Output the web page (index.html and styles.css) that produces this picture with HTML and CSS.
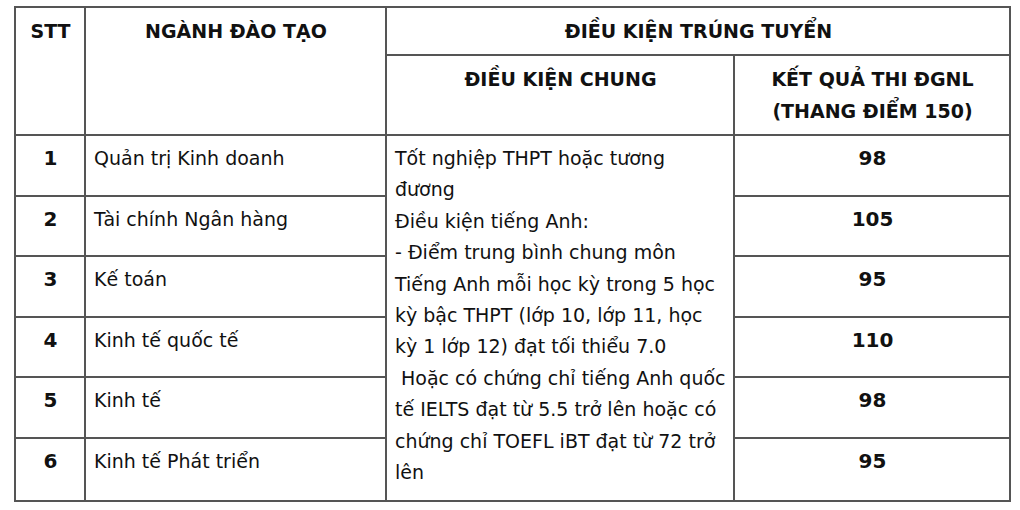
FILE: index.html
```html
<!DOCTYPE html>
<html lang="vi">
<head>
<meta charset="utf-8">
<title>Điều kiện trúng tuyển</title>
<link rel="stylesheet" href="styles.css">
</head>
<body>
<div class="page">
<table class="admit">
  <colgroup>
    <col class="c-stt">
    <col class="c-major">
    <col class="c-cond">
    <col class="c-score">
  </colgroup>
  <thead>
    <tr class="h1">
      <th rowspan="2">STT</th>
      <th rowspan="2">NGÀNH ĐÀO TẠO</th>
      <th colspan="2">ĐIỀU KIỆN TRÚNG TUYỂN</th>
    </tr>
    <tr class="h2">
      <th>ĐIỀU KIỆN CHUNG</th>
      <th>KẾT QUẢ THI ĐGNL<br>(THANG ĐIỂM 150)</th>
    </tr>
  </thead>
  <tbody>
    <tr>
      <td class="num">1</td>
      <td class="name">Quản trị Kinh doanh</td>
      <td class="cond" rowspan="6">Tốt nghiệp THPT hoặc tương<br>đương<br>Điều kiện tiếng Anh:<br>- Điểm trung bình chung môn<br>Tiếng Anh mỗi học kỳ trong 5 học<br>kỳ bậc THPT (lớp 10, lớp 11, học<br>kỳ 1 lớp 12) đạt tối thiểu 7.0<br>&nbsp;Hoặc có chứng chỉ tiếng Anh quốc<br>tế IELTS đạt từ 5.5 trở lên hoặc có<br>chứng chỉ TOEFL iBT đạt từ 72 trở<br>lên</td>
      <td class="num">98</td>
    </tr>
    <tr>
      <td class="num">2</td>
      <td class="name">Tài chính Ngân hàng</td>
      <td class="num">105</td>
    </tr>
    <tr>
      <td class="num">3</td>
      <td class="name">Kế toán</td>
      <td class="num">95</td>
    </tr>
    <tr>
      <td class="num">4</td>
      <td class="name">Kinh tế quốc tế</td>
      <td class="num">110</td>
    </tr>
    <tr>
      <td class="num">5</td>
      <td class="name">Kinh tế</td>
      <td class="num">98</td>
    </tr>
    <tr class="last">
      <td class="num">6</td>
      <td class="name">Kinh tế Phát triển</td>
      <td class="num">95</td>
    </tr>
  </tbody>
</table>
</div>
</body>
</html>
```
FILE: styles.css
```css
html, body {
  margin: 0;
  padding: 0;
  background: #ffffff;
}

.page {
  padding: 6px 0 0 14px;
}

.admit {
  border-collapse: collapse;
  table-layout: fixed;
  width: 995px;
  font-family: "DejaVu Sans", sans-serif;
  font-size: 19px;
  color: #111111;
  line-height: 31.4px;
}

.c-stt { width: 70px; }
.c-major { width: 301px; }
.c-cond { width: 348px; }
.c-score { width: 276px; }

.admit th,
.admit td {
  border: 2px solid #555555;
  padding: 7px 7px 0 8px;
  vertical-align: top;
}

.admit th {
  font-weight: bold;
  text-align: center;
  line-height: 32px;
  padding-top: 7px;
}

.h1 th { height: 39px; }
.h2 th { height: 71px; }

.admit tbody tr { height: 60.5px; }
.admit tbody tr.last { height: 63px; }

.num {
  text-align: center;
  font-weight: bold;
  font-size: 20px;
}

.name {
  text-align: left;
}

.cond {
  text-align: left;
  white-space: nowrap;
}
```
